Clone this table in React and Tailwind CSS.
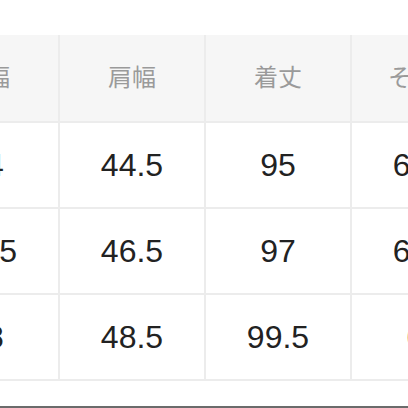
import React from 'react';

const headers = ['身幅', '肩幅', '着丈', 'そで丈'];
const rows = [
  ['54', '44.5', '95', '62.5'],
  ['56.5', '46.5', '97', '63.5'],
  ['58', '48.5', '99.5', '64'],
];

export default function App() {
  return (
    <div className="w-[408px] h-[408px] bg-white overflow-hidden flex flex-col" style={{ fontFamily: '"Liberation Sans", "Noto Sans CJK JP", sans-serif' }}>
      <div className="pt-[35px] flex-1">
        <div className="ml-[-86px] w-[582px] grid grid-cols-[144px_144px_144px_144px] gap-[2px] bg-[#ececec] pb-[2px]">
          {headers.map((h) => (
            <div key={h} className="h-[86px] bg-[#f6f6f6] flex items-center justify-center text-[24px] text-[#9a9a9a]">
              {h}
            </div>
          ))}
          {rows.map((r, i) =>
            r.map((v, j) => (
              <div key={`${i}-${j}`} className="h-[84px] bg-white flex items-center justify-center text-[32px] text-[#222]">
                {v}
              </div>
            ))
          )}
        </div>
      </div>
      <div className="h-[2px] bg-[#6b6b6b]" />
    </div>
  );
}
